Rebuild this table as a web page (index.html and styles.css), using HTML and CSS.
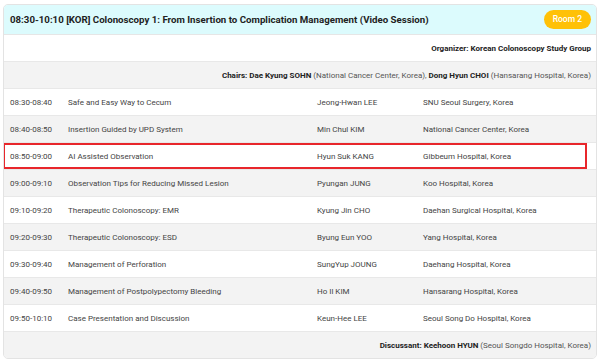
FILE: index.html
```html
<!DOCTYPE html>
<html>
<head>
<meta charset="utf-8">
<link rel="stylesheet" href="styles.css">
</head>
<body>
<div class="card">
  <div class="head">
    <div class="title">08:30-10:10 [KOR] Colonoscopy 1: From Insertion to Complication Management (Video Session)</div>
    <div class="badge">Room 2</div>
  </div>
  <div class="info white"><b>Organizer: Korean Colonoscopy Study Group</b></div>
  <div class="info grey"><b>Chairs: Dae Kyung SOHN</b> (National Cancer Center, Korea), <b>Dong Hyun CHOI</b> (Hansarang Hospital, Korea)</div>
  <div class="row white"><span>08:30-08:40</span><span>Safe and Easy Way to Cecum</span><span>Jeong-Hwan LEE</span><span>SNU Seoul Surgery, Korea</span></div>
  <div class="row grey"><span>08:40-08:50</span><span>Insertion Guided by UPD System</span><span>Min Chul KIM</span><span>National Cancer Center, Korea</span></div>
  <div class="row white highlight"><span>08:50-09:00</span><span>AI Assisted Observation</span><span>Hyun Suk KANG</span><span>Gibbeum Hospital, Korea</span></div>
  <div class="row grey"><span>09:00-09:10</span><span>Observation Tips for Reducing Missed Lesion</span><span>Pyungan JUNG</span><span>Koo Hospital, Korea</span></div>
  <div class="row white"><span>09:10-09:20</span><span>Therapeutic Colonoscopy: EMR</span><span>Kyung Jin CHO</span><span>Daehan Surgical Hospital, Korea</span></div>
  <div class="row grey"><span>09:20-09:30</span><span>Therapeutic Colonoscopy: ESD</span><span>Byung Eun YOO</span><span>Yang Hospital, Korea</span></div>
  <div class="row white"><span>09:30-09:40</span><span>Management of Perforation</span><span>SungYup JOUNG</span><span>Daehang Hospital, Korea</span></div>
  <div class="row grey"><span>09:40-09:50</span><span>Management of Postpolypectomy Bleeding</span><span>Ho Il KIM</span><span>Hansarang Hospital, Korea</span></div>
  <div class="row white"><span>09:50-10:10</span><span>Case Presentation and Discussion</span><span>Keun-Hee LEE</span><span>Seoul Song Do Hospital, Korea</span></div>
  <div class="info grey last"><b>Discussant: Keehoon HYUN</b> (Seoul Songdo Hospital, Korea)</div>
</div>
</body>
</html>
```
FILE: styles.css
```css
* { box-sizing: border-box; }
body {
  margin: 0;
  background: #fff;
  font-family: Roboto, "Liberation Sans", sans-serif;
  color: #444;
}
.card {
  margin: 4px 3px 2px 3px;
  width: 594px;
  border: 1px solid #e3e3e3;
  border-radius: 5px;
  overflow: hidden;
}
.head {
  height: 30px;
  background: #dcfbfd;
  display: flex;
  align-items: center;
  justify-content: space-between;
  padding: 0 5px 0 6px;
  border-bottom: 1px solid #e6e6e6;
}
.title {
  font-size: 9.7px;
  font-weight: 700;
  color: #222;
}
.badge {
  background: #ffc107;
  color: #fff;
  font-size: 8.5px;
  font-weight: 500;
  height: 19px;
  line-height: 19px;
  padding: 0 9px;
  border-radius: 10px;
}
.white { background: #fff; }
.grey { background: #f3f3f3; }
.info {
  height: 27px;
  display: flex;
  align-items: center;
  justify-content: flex-end;
  padding-right: 5px;
  font-size: 8px;
  color: #555;
  border-bottom: 1px solid #e8e8e8;
  white-space: pre;
}
.info b { color: #222; font-weight: 700; }
.info.last { border-bottom: 0; height: 26px; }
.row {
  height: 27px;
  display: grid;
  grid-template-columns: 58px 249px 106px 1fr;
  align-items: center;
  padding-left: 6px;
  font-size: 8px;
  color: #444;
  border-bottom: 1px solid #e8e8e8;
  position: relative;
}
.highlight::after {
  content: "";
  position: absolute;
  left: -1px;
  top: 0;
  right: 9px;
  bottom: 0;
  border: 2px solid #e8262b;
}
```
